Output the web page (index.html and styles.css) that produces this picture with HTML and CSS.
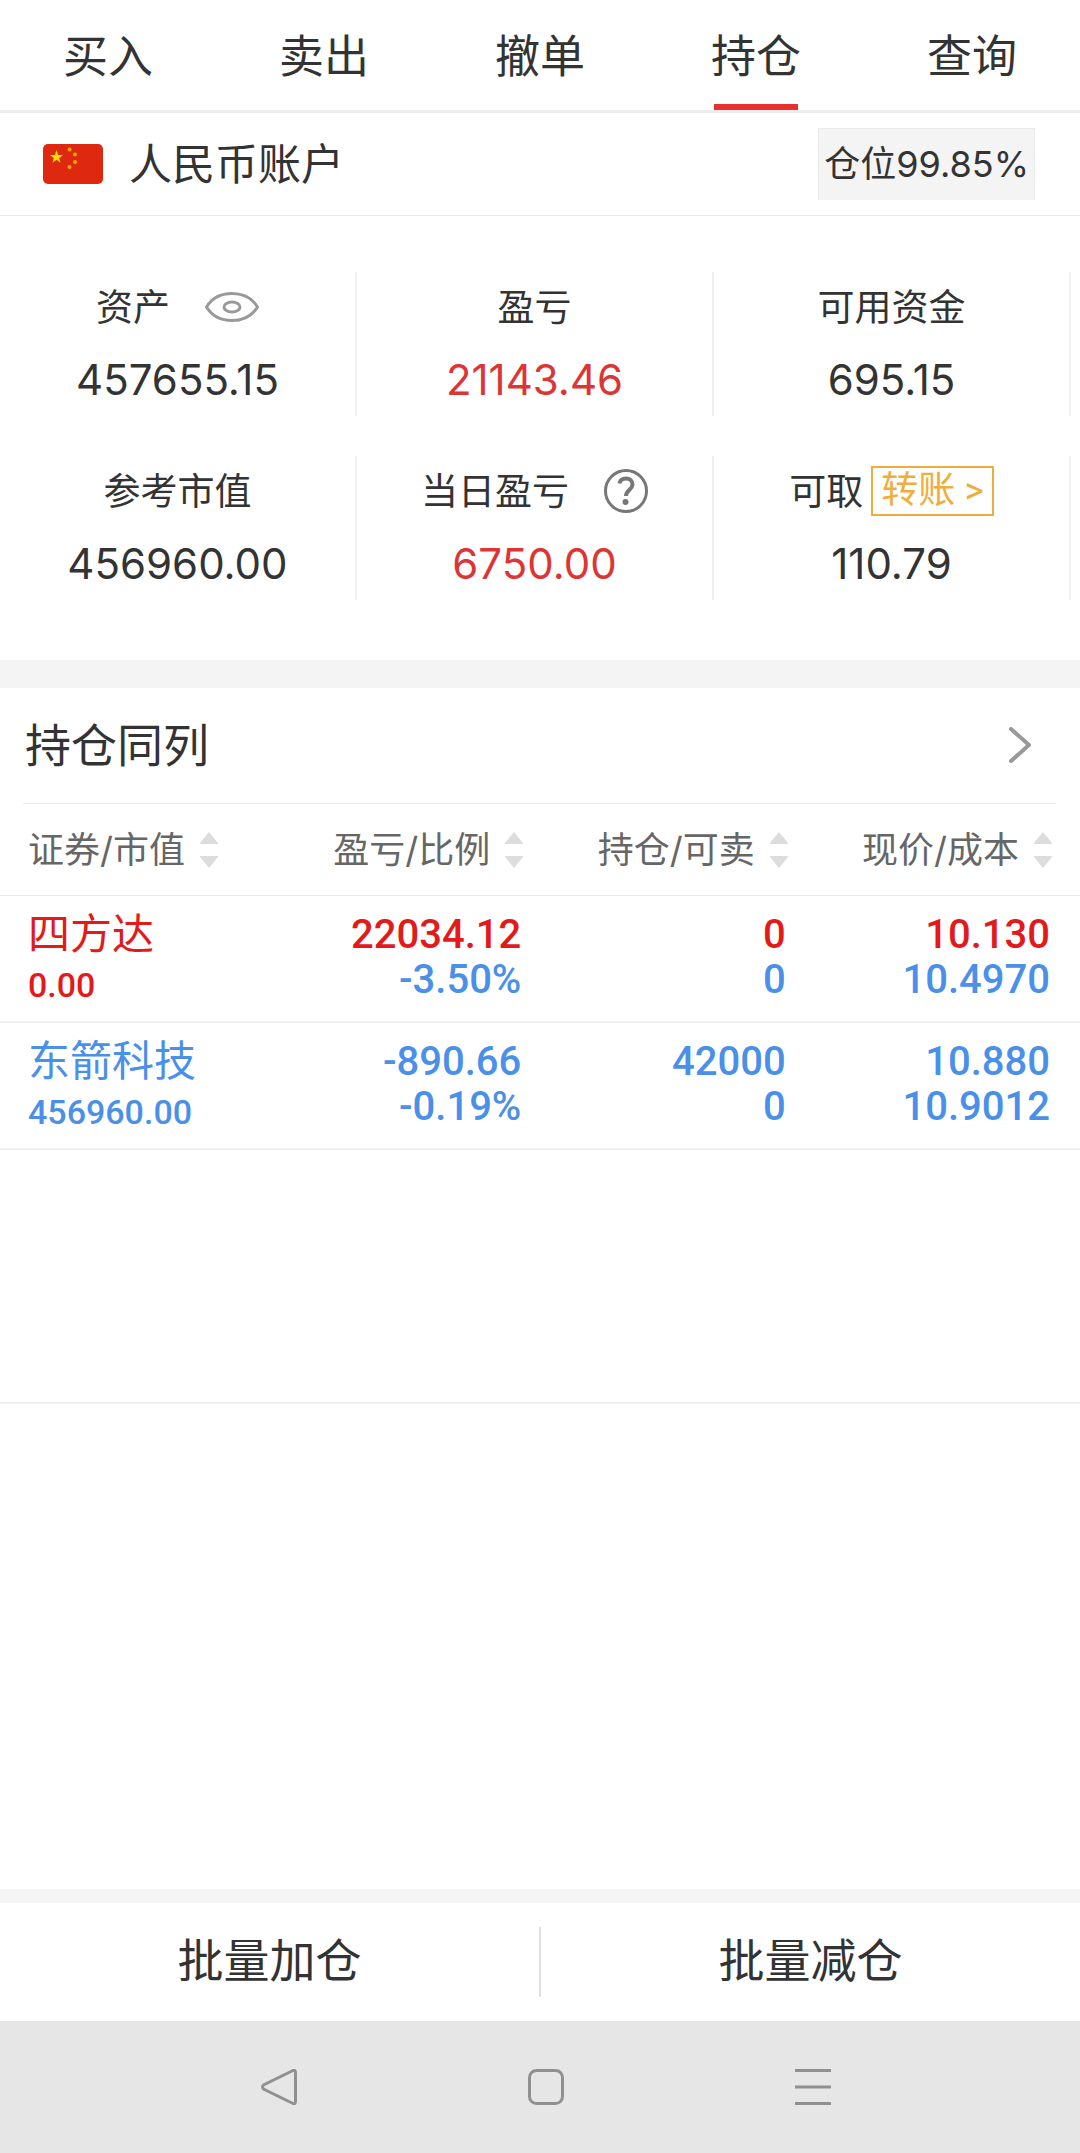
FILE: index.html
```html
<!DOCTYPE html>
<html lang="zh-CN">
<head>
<meta charset="utf-8">
<meta name="viewport" content="width=device-width, initial-scale=1">
<title>持仓</title>
<link rel="stylesheet" href="styles.css">
</head>
<body>
<nav class="tabs">
  <a class="tab" href="#buy">买入</a>
  <a class="tab" href="#sell">卖出</a>
  <a class="tab" href="#cancel">撤单</a>
  <a class="tab tab-active" href="#position" aria-current="page">持仓</a>
  <a class="tab" href="#query">查询</a>
</nav>
<main class="content">
  <section class="account">
    <svg class="flag" viewBox="0 0 60 40" aria-hidden="true">
      <rect width="60" height="40" rx="5" fill="#de2910"/>
      <path fill="#ffde00" d="M13.500 6.000L15.100 10.900L20.200 10.900L16.100 13.900L17.600 18.700L13.500 15.700L9.400 18.700L10.900 13.900L6.800 10.900L11.900 10.900Z"/>
      <g fill="#f5a800"><circle cx="26.500" cy="5.500" r="2"/><circle cx="32" cy="10.500" r="2"/><circle cx="32" cy="18" r="2"/><circle cx="26.500" cy="23" r="2"/></g>
    </svg>
    <h1 class="account-name">人民币账户</h1>
    <span class="ratio">仓位99.85%</span>
  </section>
  <section class="stats">
    <div class="stat">
      <div class="stat-label">资产
        <button class="icon-button" type="button" aria-label="隐藏资产"><svg class="eye" viewBox="0 0 54 30" fill="none" stroke="#999" stroke-width="3"><path d="M1.500 15C7 6 16 1.500 27 1.500S47 6 52.500 15C47 24 38 28.500 27 28.500S7 24 1.500 15Z"/><ellipse cx="27" cy="15" rx="8" ry="5"/></svg></button>
      </div>
      <div class="stat-value">457655.15</div>
    </div>
    <div class="stat">
      <div class="stat-label">盈亏</div>
      <div class="stat-value gain">21143.46</div>
    </div>
    <div class="stat">
      <div class="stat-label">可用资金</div>
      <div class="stat-value">695.15</div>
    </div>
    <div class="stat">
      <div class="stat-label">参考市值</div>
      <div class="stat-value">456960.00</div>
    </div>
    <div class="stat">
      <div class="stat-label">当日盈亏
        <button class="icon-button" type="button" aria-label="说明"><svg class="help" viewBox="0 0 44 44" fill="none" stroke="#777"><circle cx="22" cy="22" r="20.500" stroke-width="3"/><path d="M15.500 14.500C16 11 18.500 9.500 22 9.500C26 9.500 28.500 12 28.500 15.500C28.500 20.500 22 21 22 27" stroke-width="4"/><circle cx="21.500" cy="33" r="3" fill="#777" stroke="none"/></svg></button>
      </div>
      <div class="stat-value gain">6750.00</div>
    </div>
    <div class="stat">
      <div class="stat-label stat-label-tight">可取<a class="transfer" href="#transfer">转账 &gt;</a></div>
      <div class="stat-value">110.79</div>
    </div>
  </section>
  <section class="holdings">
    <a class="section-head" href="#peers">
      <span>持仓同列</span>
      <svg class="chevron" viewBox="0 0 24 36" fill="none" stroke="#999" stroke-width="4" stroke-linecap="round" stroke-linejoin="round"><path d="M3 2L21 18L3 34"/></svg>
    </a>
    <table class="positions">
      <thead>
        <tr>
          <th scope="col"><button class="sort" type="button">证券/市值<svg class="arrows" viewBox="0 0 18 36"><path d="M0 11L9 0L18 11V12H0ZM0 24H18V25L9 36L0 25Z"/></svg></button></th>
          <th scope="col"><button class="sort" type="button">盈亏/比例<svg class="arrows" viewBox="0 0 18 36"><path d="M0 11L9 0L18 11V12H0ZM0 24H18V25L9 36L0 25Z"/></svg></button></th>
          <th scope="col"><button class="sort" type="button">持仓/可卖<svg class="arrows" viewBox="0 0 18 36"><path d="M0 11L9 0L18 11V12H0ZM0 24H18V25L9 36L0 25Z"/></svg></button></th>
          <th scope="col"><button class="sort" type="button">现价/成本<svg class="arrows" viewBox="0 0 18 36"><path d="M0 11L9 0L18 11V12H0ZM0 24H18V25L9 36L0 25Z"/></svg></button></th>
        </tr>
      </thead>
      <tbody>
        <tr>
          <td class="up"><div class="name">四方达</div><div class="market">0.00</div></td>
          <td><div class="up">22034.12</div><div class="down">-3.50%</div></td>
          <td><div class="up">0</div><div class="down">0</div></td>
          <td><div class="up">10.130</div><div class="down">10.4970</div></td>
        </tr>
        <tr>
          <td class="down"><div class="name">东箭科技</div><div class="market">456960.00</div></td>
          <td><div class="down">-890.66</div><div class="down">-0.19%</div></td>
          <td><div class="down">42000</div><div class="down">0</div></td>
          <td><div class="down">10.880</div><div class="down">10.9012</div></td>
        </tr>
      </tbody>
    </table>
    <div class="list-end"></div>
  </section>
</main>
<footer>
  <div class="batch">
    <button class="batch-button" type="button">批量加仓</button>
    <button class="batch-button" type="button">批量减仓</button>
  </div>
  <div class="system">
    <button class="icon-button" type="button" aria-label="返回"><svg class="key" viewBox="0 0 36 36"><path d="M32 1.500Q34.500 0.500 34.500 4V32Q34.500 35.500 32 34.500L2.500 20Q0.500 18 2.500 16Z"/></svg></button>
    <button class="icon-button" type="button" aria-label="主页"><svg class="key" viewBox="0 0 36 36"><rect x="1.500" y="1.500" width="33" height="33" rx="7"/></svg></button>
    <button class="icon-button" type="button" aria-label="菜单"><svg class="key" viewBox="0 0 36 36"><path d="M0 1.500H36M0 18H36M0 34.500H36"/></svg></button>
  </div>
</footer>
</body>
</html>
```
FILE: styles.css
```css
* {
  box-sizing: border-box;
}

body {
  margin: 0;
  min-height: 100vh;
  display: flex;
  flex-direction: column;
  background: #fff;
  color: #333;
  font-family: Inter, "Noto Sans CJK SC", sans-serif;
  font-size: 36px;
  line-height: 1;
}

a {
  color: inherit;
  text-decoration: none;
}

button {
  padding: 0;
  border: 0;
  background: none;
  color: inherit;
  font: inherit;
}

svg {
  display: block;
}

.tabs {
  display: flex;
  border-bottom: 3px solid #ededed;
}

.tab {
  flex: 1;
  display: flex;
  flex-direction: column;
  align-items: center;
  height: 110px;
  padding-top: 10px;
  font-size: 45px;
  line-height: 94px;
}

.tab-active::after {
  content: "";
  width: 84px;
  height: 6px;
  background: #e93030;
}

.content {
  flex: 1;
}

.account {
  display: flex;
  align-items: center;
  height: 103px;
  padding: 0 45px 0 43px;
  border-bottom: 1px solid #ebebeb;
}

.flag {
  width: 60px;
  height: 40px;
}

.account-name {
  margin: 0 0 0 26px;
  font-size: 43px;
  font-weight: 400;
}

.ratio {
  margin-left: auto;
  padding: 0 5px;
  border: 1px solid #ebebeb;
  border-bottom: 0;
  background: #f4f4f4;
  line-height: 71px;
}

.stats {
  display: grid;
  grid-template-columns: repeat(3, 1fr);
  row-gap: 40px;
  padding: 56px 9px 60px 0;
}

.stat {
  height: 144px;
  border-right: 2px solid #f0f0f0;
  text-align: center;
}

.stat-label {
  display: flex;
  justify-content: center;
  align-items: center;
  gap: 35px;
  height: 70px;
  font-size: 37px;
}

.stat-label-tight {
  gap: 8px;
}

.eye {
  width: 54px;
  height: 30px;
}

.help {
  width: 44px;
  height: 44px;
}

.transfer {
  padding: 0 8px;
  border: 2px solid #f0ad3c;
  color: #f0ad3c;
  font-family: Roboto, "Noto Sans CJK SC", sans-serif;
  line-height: 46px;
}

.stat-value {
  font-size: 42px;
  line-height: 76px;
}

.gain {
  color: #dc3535;
}

.holdings {
  border-top: 28px solid #f4f4f4;
}

.section-head {
  display: flex;
  align-items: center;
  justify-content: space-between;
  height: 116px;
  margin: 0 24px 0 23px;
  padding: 0 24px 2px 2px;
  border-bottom: 1px solid #ebebeb;
  font-size: 46px;
}

.chevron {
  width: 24px;
  height: 36px;
}

.positions {
  width: 100%;
  border-spacing: 0;
  table-layout: fixed;
}

.positions th {
  height: 92px;
  padding: 0 28px 0 0;
  border-bottom: 1px solid #ebebeb;
  color: #666;
  font-weight: 400;
}

.positions th:first-child {
  width: 287px;
  padding: 0 0 0 28px;
}

.positions td {
  height: 127px;
  padding: 16px 30px 0 0;
  border-bottom: 2px solid #f0f0f0;
  font-family: Roboto, "Noto Sans CJK SC", sans-serif;
  font-size: 40px;
  font-weight: 500;
  line-height: 45px;
  text-align: right;
  vertical-align: top;
}

.positions td:first-child {
  padding: 12px 0 0 28px;
  text-align: left;
}

.sort {
  display: flex;
  align-items: center;
  justify-content: flex-end;
  gap: 15px;
  width: 100%;
}

.positions th:first-child .sort {
  justify-content: flex-start;
}

.arrows {
  width: 18px;
  height: 36px;
  fill: #ddd;
}

.name {
  font-size: 42px;
  font-weight: 400;
  line-height: 54px;
}

.market {
  font-size: 34px;
  line-height: 46px;
}

.up {
  color: #e21a1a;
}

.down {
  color: #4a90e8;
}

.list-end {
  height: 254px;
  border-bottom: 2px solid #f0f0f0;
}

.batch {
  display: flex;
  align-items: center;
  height: 132px;
  border-top: 14px solid #f4f4f4;
}

.batch-button {
  flex: 1;
  height: 70px;
  padding-bottom: 4px;
  font-size: 46px;
}

.batch-button:first-child {
  border-right: 2px solid #e0e0e0;
}

.system {
  display: flex;
  align-items: center;
  justify-content: center;
  gap: 231px;
  height: 132px;
  padding-left: 12px;
  background: #e6e6e6;
}

.key {
  width: 36px;
  height: 36px;
  fill: none;
  stroke: #909090;
  stroke-width: 3px;
}
```
